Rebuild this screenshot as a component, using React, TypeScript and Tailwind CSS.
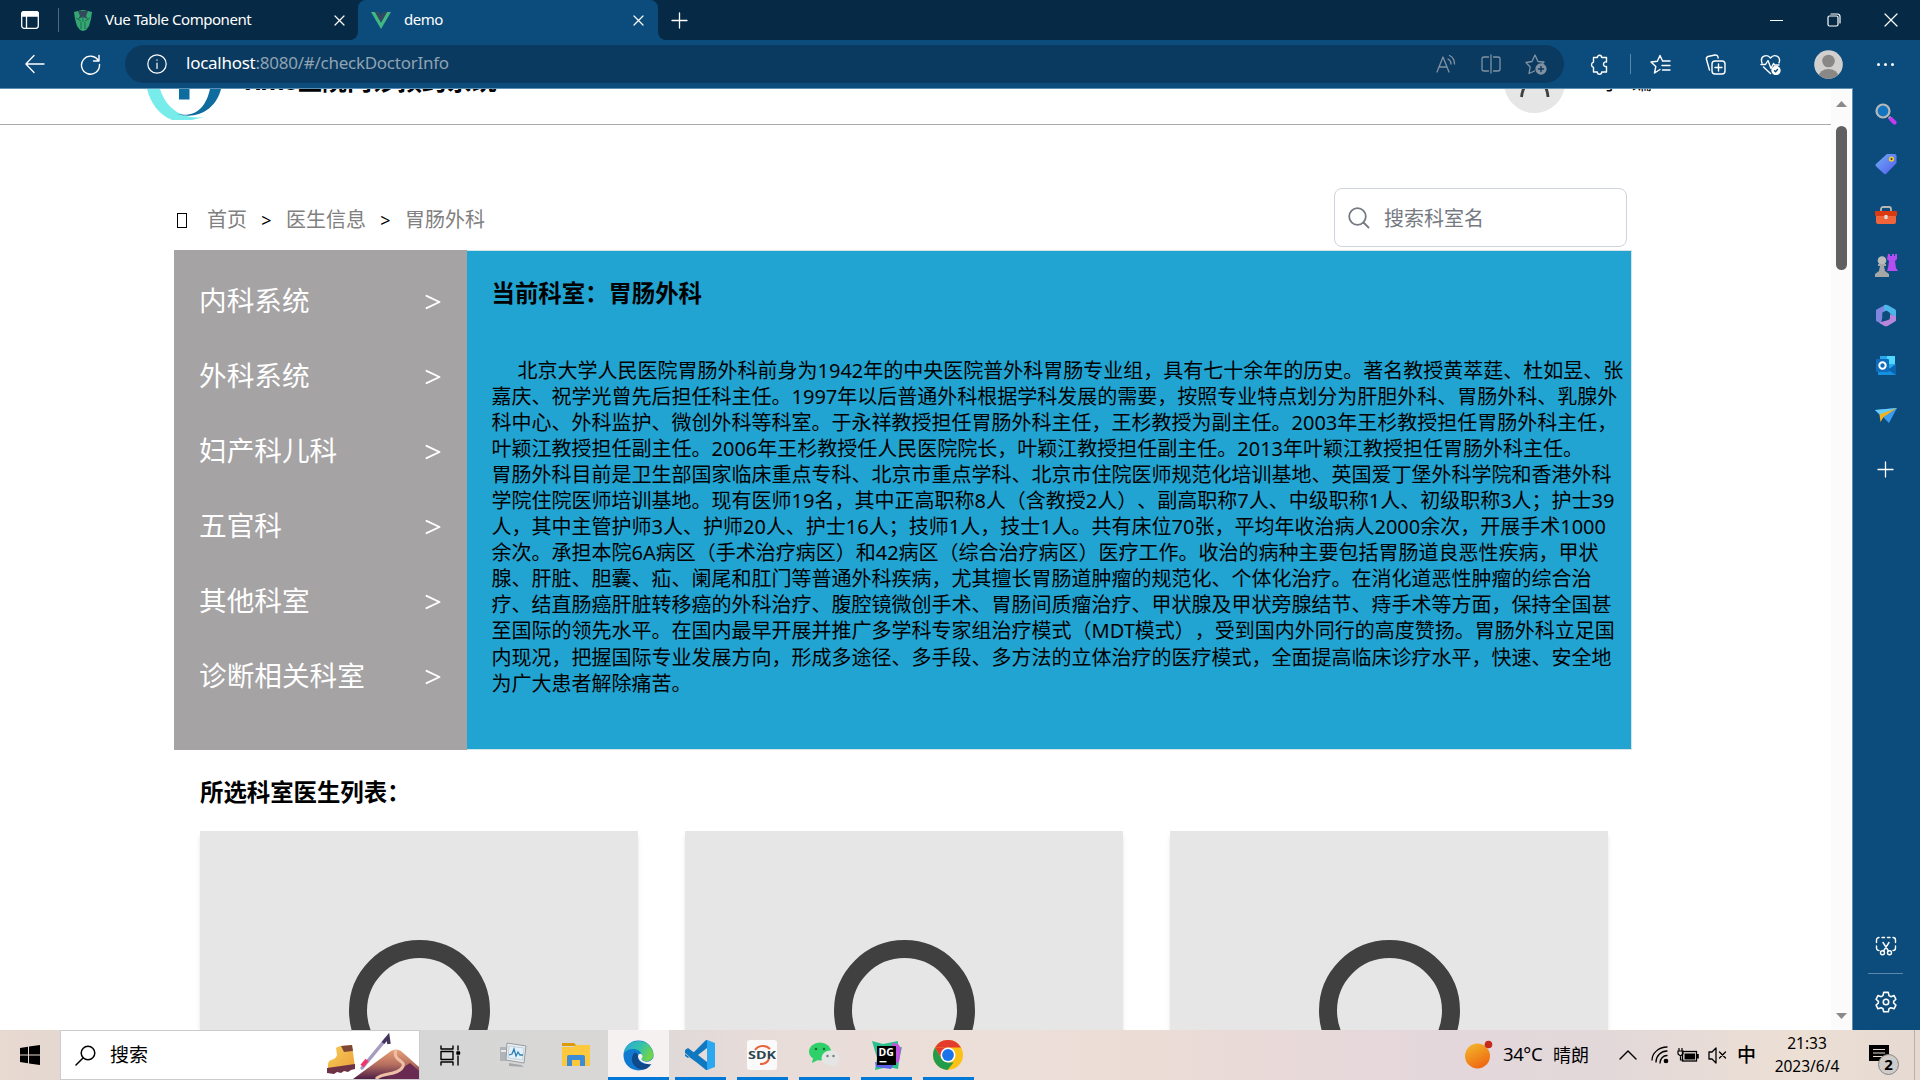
import React from "react";

type Kids = { children?: React.ReactNode };

const Slot = ({ w, children }: { w: string } & Kids) => (
  <div className={`flex shrink-0 items-center justify-center ${w}`}>{children}</div>
);

function Line({ size = 20, box = 20, sw = 1.3, className = "", children }: { size?: number; box?: number; sw?: number; className?: string } & Kids) {
  return (
    <svg width={size} height={size} viewBox={`0 0 ${box} ${box}`} fill="none" stroke="currentColor" strokeWidth={sw} strokeLinecap="round" strokeLinejoin="round" className={`shrink-0 ${className}`}>
      {children}
    </svg>
  );
}

const CloseX = () => (
  <Line size={11} box={11} sw={1.2}>
    <path d="M1 1l9 9M10 1l-9 9" />
  </Line>
);

function TabBar() {
  return (
    <div className="flex h-10 bg-[#0c4c7c] text-white">
      <div className="flex h-10 w-[358px] items-center rounded-br-lg bg-[#062a45]">
        <div className="ml-5 flex h-5 w-5 items-center justify-center">
          <Line size={20}>
            <rect x="1.7" y="1.7" width="16.6" height="16.6" rx="2.5" />
            <path d="M1.7 3.7a2 2 0 0 1 2-2h12.6a2 2 0 0 1 2 2V6H1.7z" fill="white" />
            <path d="M6.5 6v12" />
          </Line>
        </div>
        <div className="ml-[18px] h-6 w-px bg-[#4f6a80]" />
        <svg width="18" height="21" viewBox="0 0 18 21" className="ml-[15px]">
          <path d="M4 1l5-1 5 1 4 1-1 7-2 7-3 4-3 1-3-1-3-4-2-7-1-7z" fill="#35a872" />
          <path d="M4 1h10l-2 5 2 3-5-2-5 2 2-3z" fill="#35495e" />
          <path d="M2 8l5 3M16 8l-5 3M7 12v7M11 12v7M9 6v6" stroke="#1c6b52" strokeWidth="1" />
        </svg>
        <span className="ml-[13px] w-[229px] pb-0.5 text-[15px] tracking-[-0.45px]">Vue Table Component</span>
        <CloseX />
      </div>
      <div className="bg-[#062a45]">
        <div className="flex h-10 w-[300px] items-center rounded-t-lg bg-[#0c4c7c]">
          <svg width="20" height="17" viewBox="0 0 20 17" className="ml-[13px]">
            <path d="M0 0h4l6 10.5L16 0h4L10 17z" fill="#41b883" />
            <path d="M4 0h3.700L10 4l2.300-4H16l-6 10.500z" fill="#35495e" />
          </svg>
          <span className="ml-[13px] w-[229px] pb-0.5 text-[15px] tracking-[-0.5px]">demo</span>
          <CloseX />
        </div>
      </div>
      <div className="flex h-10 flex-1 items-center rounded-bl-lg bg-[#062a45] pl-[13px]">
        <Line size={17} box={17} sw={1.3}>
          <path d="M8.500 1v15M1 8.500h15" />
        </Line>
        <div className="ml-auto flex pr-px">
          <Slot w="w-[57px]">
            <Line size={13} box={13} sw={1.2}><path d="M0 6.500h13" /></Line>
          </Slot>
          <Slot w="w-[57px]">
            <Line size={14} box={14} sw={1.2}>
              <rect x="1" y="3" width="10" height="10" rx="1.500" />
              <path d="M4 1h6.500A2.500 2.500 0 0 1 13 3.500V10" />
            </Line>
          </Slot>
          <Slot w="w-[57px]">
            <Line size={14} box={14} sw={1.2}><path d="M1 1l12 12M13 1L1 13" /></Line>
          </Slot>
        </div>
      </div>
    </div>
  );
}

function Toolbar() {
  return (
    <div className="flex h-12 items-center bg-[#0c4c7c] text-white">
      <div className="flex w-[125px] pl-[15px]">
        <Slot w="w-10">
          <Line size={20}><path d="M19 10H1M9 1.500L.900 10 9 18.500" /></Line>
        </Slot>
        <Slot w="w-[70px]">
          <Line size={21} box={21} sw={1.400}>
            <path d="M18.500 7A9 9 0 1 0 19.500 10.500M19 1.500V7h-5.500" />
          </Line>
        </Slot>
      </div>
      <div className="flex h-[38px] w-[1439px] items-center rounded-full bg-[#0a3a60]">
        <Line size={20} className="ml-[22px]" sw={1.200}>
          <circle cx="10" cy="10" r="9.200" />
          <path d="M10 9v5.500M10 5.800v.400" />
        </Line>
        <span className="ml-[19px] pb-0.5 text-[17px] tracking-[-0.260px] text-[#8fa3b3]">
          <span className="text-white">localhost</span>:8080/#/checkDoctorInfo
        </span>
        <div className="ml-auto flex pr-[6px] text-[#8092a2]">
          <Slot w="w-[45px]">
            <Line size={20} sw={1.300}>
              <path d="M1 18L7 3l6 15M3 13h8M12 5c2 1 3 3 3 5M13.500 1.500c3 1.500 5 4.500 5 8.500" />
            </Line>
          </Slot>
          <Slot w="w-[45px]">
            <Line size={20} sw={1.300}>
              <path d="M10 1v18M7.500 3H3a2 2 0 0 0-2 2v10a2 2 0 0 0 2 2h4.500M12.500 3H17a2 2 0 0 1 2 2v10a2 2 0 0 1-2 2h-4.500" />
            </Line>
          </Slot>
          <Slot w="w-[45px]">
            <Line size={22} box={22} sw={1.300}>
              <path d="M9.500 18L4 20.500l1.200-6.500L1 9.500l6-1L10 2l3 6.500 6 .500-1.500 1.500" />
              <circle cx="16" cy="16" r="5" fill="currentColor" />
              <path d="M13.500 16h5M16 13.500v5" stroke="#0a3a60" strokeWidth="1.400" />
            </Line>
          </Slot>
        </div>
      </div>
      <Slot w="w-[70px]">
        <Line size={21} box={21} sw={1.400}>
          <path d="M4.500 3.500h3.800a2.200 2.200 0 1 1 4.400 0h4.800V8c-4-1-4 5.500 0 4.500V18h-4.800a2.200 2.200 0 1 1-4.400 0H4.500v-4.700a2.700 2.700 0 0 1 0-5.200z" />
        </Line>
      </Slot>
      <div className="-ml-1 h-5 w-px bg-[#5c87a8]" />
      <Slot w="w-[58px]">
        <Line size={21} box={21} sw={1.400}>
          <path d="M10 15.500L4.500 19l1.300-6.500L1 8l6.300-.800L10 1.500l2.700 5.700M13 7h7M12 11.500h8M12.500 16H20" />
        </Line>
      </Slot>
      <Slot w="w-[52px]">
        <Line size={21} box={21} sw={1.400}>
          <rect x="7" y="7" width="13" height="13" rx="3" />
          <path d="M13.500 10v7M10 13.500h7M4.500 16L1.500 5.500A2.500 2.500 0 0 1 3 2.500L10 1a2.500 2.500 0 0 1 3 2l.200 1" />
        </Line>
      </Slot>
      <Slot w="w-[58px]">
        <Line size={21} box={21} sw={1.400}>
          <path d="M2 9C-.500 2 7-.500 10.500 4 14-.500 21.500 2 19 9M1 10.500h4.500L8 6.500l3 8 2.500-5 1 1.500H19M3.500 13l7 6.500" />
          <circle cx="16" cy="16.500" r="4" fill="white" />
          <path d="M14.500 16.800l1 1 2-2.300" stroke="#0c4c7c" />
        </Line>
      </Slot>
      <Slot w="w-[58px]">
        <svg width="29" height="29" viewBox="0 0 29 29">
          <defs><clipPath id="av"><circle cx="14.500" cy="14.500" r="14.300" /></clipPath></defs>
          <g clipPath="url(#av)">
            <rect width="29" height="29" fill="#d2d0ce" />
            <circle cx="14.500" cy="11" r="6.300" fill="#8a8886" />
            <ellipse cx="14.500" cy="27" rx="10" ry="8" fill="#8a8886" />
          </g>
        </svg>
      </Slot>
      <Slot w="w-[56px]">
        <div className="flex gap-1"><i className="h-[3px] w-[3px] rounded-full bg-white" /><i className="h-[3px] w-[3px] rounded-full bg-white" /><i className="h-[3px] w-[3px] rounded-full bg-white" /></div>
      </Slot>
    </div>
  );
}

function SiteHeader() {
  return (
    <header className="flex h-9 shrink-0 items-start overflow-hidden border-b border-[#aaaaaa]">
      <svg width="78" height="31" viewBox="0 0 78 31" className="ml-[146px]">
        <path d="M1 0C5 16 17 33 38 33L58 28C36 31 20 19 14 0z" fill="#78ecea" />
        <path d="M75 0C70 20 52 31 31 25C50 29 60 18 64 0z" fill="#0f6c9f" />
        <rect x="33" y="0" width="10.500" height="10.500" fill="#0f6c9f" />
      </svg>
      <h1 className="-mt-[27px] ml-[16px] w-[269px] text-[25px] leading-9 font-bold whitespace-nowrap"><span className="inline-block w-[57px] tracking-[-1.5px]">Yimo</span>医院门诊预约系统</h1>
      <div className="-mt-[37px] ml-[995px] h-[61px] w-[61px] rounded-full bg-[#e6e6e6] pt-[30px]">
        <svg width="61" height="20" viewBox="0 0 61 20">
          <path d="M17.500 15C19 3 24 -1 31 -1s12 4 13 16" fill="none" stroke="#404040" strokeWidth="2.800" />
        </svg>
      </div>
      <span className="-mt-[18px] ml-[36px] text-[20px] leading-6 tracking-[11px]">小编</span>
    </header>
  );
}

const crumbs = ["首页", "医生信息", "胃肠外科"];
const departments = ["内科系统", "外科系统", "妇产科儿科", "五官科", "其他科室", "诊断相关科室"];
const intro = [
  "北京大学人民医院胃肠外科前身为1942年的中央医院普外科胃肠专业组，具有七十余年的历史。著名教授黄萃莛、杜如昱、张",
  "嘉庆、祝学光曾先后担任科主任。1997年以后普通外科根据学科发展的需要，按照专业特点划分为肝胆外科、胃肠外科、乳腺外",
  "科中心、外科监护、微创外科等科室。于永祥教授担任胃肠外科主任，王杉教授为副主任。2003年王杉教授担任胃肠外科主任，",
  "叶颖江教授担任副主任。2006年王杉教授任人民医院院长，叶颖江教授担任副主任。2013年叶颖江教授担任胃肠外科主任。",
  "胃肠外科目前是卫生部国家临床重点专科、北京市重点学科、北京市住院医师规范化培训基地、英国爱丁堡外科学院和香港外科",
  "学院住院医师培训基地。现有医师19名，其中正高职称8人（含教授2人）、副高职称7人、中级职称1人、初级职称3人；护士39",
  "人，其中主管护师3人、护师20人、护士16人；技师1人，技士1人。共有床位70张，平均年收治病人2000余次，开展手术1000",
  "余次。承担本院6A病区（手术治疗病区）和42病区（综合治疗病区）医疗工作。收治的病种主要包括胃肠道良恶性疾病，甲状",
  "腺、肝脏、胆囊、疝、阑尾和肛门等普通外科疾病，尤其擅长胃肠道肿瘤的规范化、个体化治疗。在消化道恶性肿瘤的综合治",
  "疗、结直肠癌肝脏转移癌的外科治疗、腹腔镜微创手术、胃肠间质瘤治疗、甲状腺及甲状旁腺结节、痔手术等方面，保持全国甚",
  "至国际的领先水平。在国内最早开展并推广多学科专家组治疗模式（MDT模式），受到国内外同行的高度赞扬。胃肠外科立足国",
  "内现况，把握国际专业发展方向，形成多途径、多手段、多方法的立体治疗的医疗模式，全面提高临床诊疗水平，快速、安全地",
  "为广大患者解除痛苦。",
];

function Page() {
  return (
    <main className="flex min-w-0 flex-1 flex-col overflow-hidden bg-white text-black [text-spacing-trim:space-all]">
      <SiteHeader />
      <div className="ml-[174px] w-[1458px]">
        <div className="flex h-[125px] items-end">
          <nav className="mb-[16px] flex items-center text-[20px] leading-[28px]">
            <span className="mr-[20px] ml-[3px] h-[15px] w-[10px] border border-black" />
            {crumbs.map((c, i) => (
              <React.Fragment key={c}>
                {i > 0 && <span className="w-[39px] text-center text-[18px]">&gt;</span>}
                <span className="text-[#808080]">{c}</span>
              </React.Fragment>
            ))}
          </nav>
          <div className="mr-[5px] mb-[3px] ml-auto flex h-[59px] w-[293px] items-center rounded-lg border border-[#cfd3dc] text-[20px] text-[#757a82]">
            <Line size={22} box={22} sw={1.800} className="mr-[14px] ml-[13px]">
              <circle cx="9.500" cy="9.500" r="8.300" />
              <path d="M15.500 15.500l5 5" />
            </Line>
            <span className="pt-0.5">搜索科室名</span>
          </div>
        </div>
        <section className="flex h-[500px]">
          <ul className="w-[293px] bg-[#a5a3a4] pt-[14px] text-white">
            {departments.map((d) => (
              <li key={d} className="flex h-[75px] items-center justify-between pr-[26px] pl-[25px] text-[27.650px]">
                <span className="-mt-px">{d}</span>
                <Line size={16} box={16} sw={1.900}><path d="M1.500 1.800L14.500 8 1.500 14.200" /></Line>
              </li>
            ))}
          </ul>
          <div className="min-w-0 flex-1 border border-l-0 border-[#d5e2e8] bg-[#22a4d2] pl-[24.500px]">
            <h3 className="mt-[24px] text-[23.400px] leading-[36px] font-bold">当前科室：胃肠外科</h3>
            <div className="mt-[47px] text-[20px] leading-[26.050px] whitespace-nowrap">
              {intro.map((l, i) => (
                <p key={l} className={i === 0 ? "pl-[26px]" : ""}>{l}</p>
              ))}
            </div>
          </div>
        </section>
        <section className="pl-[26px]">
          <h3 className="mt-[24px] mb-[21px] text-[23.400px] leading-[36px] font-bold">所选科室医生列表：</h3>
          <div className="flex gap-[47px]">
            {[0, 1, 2].map((k) => (
              <div key={k} className="flex h-[400px] w-[438px] shrink-0 justify-center bg-[#e6e6e6] pt-[109px] shadow-md">
                <div className="h-[141px] w-[141px] rounded-full border-[18px] border-[#404040]" />
              </div>
            ))}
          </div>
        </section>
      </div>
    </main>
  );
}

function Scrollbar() {
  return (
    <div className="flex w-[22px] flex-col items-center border-r border-[#5d8fb3] bg-[#fbfbfb]">
      <svg width="11" height="6" viewBox="0 0 11 6" className="mt-3"><path d="M5.500 0L11 6H0z" fill="#8a8a8a" /></svg>
      <div className="mt-[19px] h-36 w-[11px] rounded-full bg-[#606060]" />
      <svg width="11" height="6" viewBox="0 0 11 6" className="mt-auto mb-[11px]"><path d="M0 0h11L5.500 6z" fill="#8a8a8a" /></svg>
    </div>
  );
}

const sideIcons: React.ReactNode[] = [
  <svg key="search" width="22" height="22" viewBox="0 0 22 22">
    <path d="M14 14l2 2" stroke="#b8b8b8" strokeWidth="3" />
    <path d="M16 16l3.500 3.500" stroke="#c53bf5" strokeWidth="4" strokeLinecap="round" />
    <circle cx="8" cy="8" r="6.500" fill="#1375c0" stroke="#b8b8b8" strokeWidth="2.200" />
  </svg>,
  <svg key="tag" width="22" height="22" viewBox="0 0 22 22">
    <defs><linearGradient id="tg" x1="0" y1="0" x2="1" y2="1"><stop offset="0" stopColor="#6fb0f5" /><stop offset="1" stopColor="#5659ee" /></linearGradient></defs>
    <path d="M12 1h7.500a2 2 0 0 1 2 2v7L11.500 20.500a2 2 0 0 1-2.800 0L1.200 13.500a2 2 0 0 1 0-2.800z" fill="url(#tg)" />
    <circle cx="16.500" cy="6" r="2.600" fill="#f6cc2a" /><circle cx="16.500" cy="6" r="1" fill="#333" />
  </svg>,
  <svg key="tools" width="24" height="18" viewBox="0 0 24 18">
    <path d="M7 6V3a2 2 0 0 1 2-2h6a2 2 0 0 1 2 2v3" fill="none" stroke="#b5b5b5" strokeWidth="1.800" />
    <rect x="2" y="8" width="20" height="10" rx="2" fill="#f0643a" />
    <rect x="1" y="5" width="22" height="5" rx="1" fill="#d93a10" />
    <rect x="10.300" y="9" width="3.400" height="4" rx="1" fill="#ddd" />
  </svg>,
  <svg key="games" width="24" height="24" viewBox="0 0 24 24">
    <path d="M14 1h2v2h2V1h2v2h1V1h2v5l-2 2 1 7 2 3H13l1-3 1-7-2-2z" fill="#b44df2" />
    <circle cx="8" cy="7.500" r="4.300" fill="#b9b9b9" />
    <path d="M4 11h8v2h-2l1 5 4 3v3H1v-3l4-3 1-5H4z" fill="#a6a6a6" />
  </svg>,
  <svg key="m365" width="22" height="23" viewBox="0 0 22 23">
    <path d="M11 .500L1.500 5.500Q1 6 1 7v9q0 1 1 1.500l4 2L7.500 13V9.500L11 7z" fill="#7f86e0" />
    <path d="M9 1.300Q11 0 13 1.300l7 4q1 .600 1 1.700v6.500l-5.500-3.500L9 6.500z" fill="#4bb6ea" />
    <path d="M21 12.500V16q0 1-1 1.600l-7 4.200q-2 1-4 0l-5-3L14.500 15.500V10z" fill="#b986dc" />
    <path d="M7.500 8.500L11.500 6.500l3.500 2.500v5l-4 2.500-3.500-2z" fill="#0c4c7c" />
  </svg>,
  <svg key="mail" width="22" height="21" viewBox="0 0 22 21">
    <rect x="5" y="1" width="15" height="12" fill="#28a8ea" /><rect x="12" y="1" width="8" height="8" fill="#50d9ff" />
    <path d="M3 11l9 4 9-6v11H3z" fill="#1490df" /><path d="M21 9v11l-8-5z" fill="#0a64b0" />
    <rect x="1" y="4" width="13" height="13" rx="1" fill="#0f6cbd" />
    <circle cx="7.500" cy="10.500" r="3.200" fill="none" stroke="white" strokeWidth="2" />
  </svg>,
  <svg key="send" width="22" height="17" viewBox="0 0 22 17">
    <path d="M0 3L22 1 14 16 8 10z" fill="#3b9cf0" /><path d="M0 3L22 1 5 8z" fill="#65cdf8" />
    <path d="M4.500 7.500L22 1 8.500 10 5.500 15z" fill="#f6b21c" />
  </svg>,
];

function EdgeSidebar() {
  return (
    <aside className="flex w-[67px] flex-col items-center bg-[#0c4c7c] pt-px pr-0.5 text-white">
      {sideIcons.map((ic, i) => (
        <div key={i} className="flex h-[50.300px] shrink-0 items-center justify-center">{ic}</div>
      ))}
      <div className="mt-[20px]"><Line size={17} box={17} sw={1.300}><path d="M8.500 1v15M1 8.500h15" /></Line></div>
      <div className="mt-auto">
        <Line size={22} box={22} sw={1.400}>
          <path d="M4 15.500A2.500 2.500 0 0 1 1.500 13v-2M1.500 7.500V5A2.500 2.500 0 0 1 4 2.500M7 2.500h2.500M12.500 2.500H15M18 2.500A2.500 2.500 0 0 1 20.500 5v2.500M20.500 11v2a2.500 2.500 0 0 1-2.500 2.500M8 7.500l5.500 8.500M14 7.500L8.500 16" />
          <circle cx="7.500" cy="17.800" r="2" /><circle cx="14.500" cy="17.800" r="2" />
        </Line>
      </div>
      <div className="mt-[16px] h-px w-[35px] bg-[#5c87a8]" />
      <div className="mt-[17px] mb-[17px]">
        <Line size={22} box={24} sw={1.700}>
          <circle cx="12" cy="12" r="3" />
          <path d="M9.500 1.500h5l.800 3.500 2 1.200 3.500-1.200 2 4-2.500 2.300v1.800l2.500 2.300-2 4-3.500-1.200-2 1.200-.800 3.300h-5l-.800-3.300-2-1.200-3.500 1.200-2-4 2.500-2.300v-1.800L1.200 9l2-4 3.500 1.200 2-1.200z" />
        </Line>
      </div>
    </aside>
  );
}

function AppButton({ w, bar, active, children }: { w: string; bar: string; active?: boolean } & Kids) {
  return (
    <div className={`flex h-[50px] shrink-0 flex-col items-center ${w} ${active ? "bg-[#f4f1f0]" : ""}`}>
      <div className="flex h-[47px] items-center pt-[3px]">{children}</div>
      <div className={`h-[3px] bg-[#0078d7] ${bar}`} />
    </div>
  );
}

function Taskbar() {
  return (
    <footer className="flex h-[50px] items-center bg-[linear-gradient(90deg,#e8d9d1_0px,#e4d8d1_60px,#d6d6d6_420px,#d8d7d6_590px,#e8dcd9_760px,#ecdfd9_980px,#ecdcd6_1150px,#e4d7dc_1440px,#e2d8d9_1600px,#ecdfd4_1800px,#e6d9d2_1920px)] text-black">
      <Slot w="w-[60px]">
        <svg width="20" height="20" viewBox="0 0 20 20" fill="black"><path d="M0 3l8-1.200v7.700H0zM9 1.600L20 0v9.500H9zM0 10.500h8v7.700L0 17zM9 10.500h11V20L9 18.400z" /></svg>
      </Slot>
      <div className="flex h-[50px] w-[360px] items-center border border-[#cccccc] bg-white">
        <Line size={21} box={21} sw={1.500} className="ml-[14px]"><circle cx="13" cy="8" r="6.800" /><path d="M8 13l-7 7" /></Line>
        <span className="ml-[14px] text-[19px]">搜索</span>
        <svg width="95" height="48" viewBox="0 0 95 48" className="ml-auto">
          <defs>
            <linearGradient id="mt" x1="0" y1="0" x2="0" y2="1"><stop offset="0" stopColor="#e8a078" /><stop offset=".5" stopColor="#b8705f" /><stop offset="1" stopColor="#4e1f48" /></linearGradient>
            <linearGradient id="bt" x1="0" y1="0" x2="1" y2="1"><stop offset="0" stopColor="#f6cf5a" /><stop offset="1" stopColor="#eda03c" /></linearGradient>
          </defs>
          <path d="M12 17q2-2 5-2l11-1 3 22-27 2q-1-8 3-9 5-1 6-5z" fill="url(#bt)" />
          <path d="M17 15l11-1 1 6-9 1z" fill="#7d4736" />
          <path d="M3 37l28-4v5l-4 1-3 2-4-1-3 2-4-1-3 2-7-1z" fill="#6e3247" />
          <path d="M38 37L62 8" stroke="#a69bc0" strokeWidth="3.500" strokeLinecap="round" />
          <path d="M38 35l5-6" stroke="#f0356c" strokeWidth="4" />
          <path d="M59 12l5-6 1 7" stroke="#43365c" strokeWidth="3.500" fill="none" />
          <path d="M29 48L67 20q5-3 10 0L95 36V48z" fill="url(#mt)" />
          <path d="M62 48l18-12 6-4 9 8v8z" fill="#6a2b52" />
          <path d="M72 19c-4 12 12 10 6 18s-20 4-26 11" stroke="#eebfa6" strokeWidth="3" fill="none" />
        </svg>
      </div>
      <Slot w="w-[60px]">
        <Line size={21} box={21} sw={1.400}>
          <path d="M1 1v3h12V1M1 20v-3h12v3" /><rect x="1" y="6.500" width="12" height="8" /><path d="M18 1v4M18 11v9" /><rect x="17" y="7" width="2.500" height="2" fill="black" />
        </Line>
      </Slot>
      <Slot w="w-[66px]">
        <svg width="28" height="26" viewBox="0 0 28 26">
          <path d="M1 5h12v14H1z" fill="#b0b4b8" /><path d="M2 8h8v2H2z" fill="#e8e8e8" /><path d="M8 1l19 3-2 17-18-3z" fill="#eceeef" stroke="#979ba0" />
          <path d="M10 4l15 2-1.500 12L9 16z" fill="#e2f1fa" stroke="#9fb4c2" strokeWidth=".5" /><path d="M10 13l3-1 2-5 2 7 2-4 2 3 3 0" stroke="#2c7fb4" fill="none" strokeWidth="1.300" />
          <path d="M10 21l12 2 3 2-15-1z" fill="#a5a8ab" />
        </svg>
      </Slot>
      <Slot w="w-[62px]">
        <svg width="28" height="24" viewBox="0 0 28 24" className="ml-[-3px]">
          <path d="M0 0h12l3 3H0z" fill="#dd9a08" /><path d="M0 4h12l2-2h14v21H0z" fill="#fcc93e" />
          <path d="M5 23v-9a2 2 0 0 1 2-2h14a2 2 0 0 1 2 2v9h-5v-6h-8v6z" fill="#3b8bd9" />
        </svg>
      </Slot>
      <AppButton w="w-[61px]" bar="w-full" active>
        <svg width="31" height="31" viewBox="0 0 31 31">
          <defs>
            <linearGradient id="eg" x1="0" y1="0" x2="1" y2=".4"><stop offset="0" stopColor="#2aa7dc" /><stop offset=".6" stopColor="#35c3a8" /><stop offset="1" stopColor="#70d44a" /></linearGradient>
          </defs>
          <circle cx="15.500" cy="15.500" r="15" fill="#0f7ad0" />
          <path d="M.800 13C3-2 27-4 30.300 14c.500 6-6 9-11 6-2-1-1-2-.500-4C19 9 7 6 .800 13z" fill="url(#eg)" />
          <path d="M11 13c-6 9 2 17 10 16.500 4-1 7-4 8-7-6 3-14 1-14-6 0-2-2-5-4-3.500z" fill="#114a8b" />
          <path d="M19 15c2 3-2 3 0 5 3 3 10 2 11.500-3l.500 5-2 2c-6 1-13-2-14-7 0-4 3-4 4-2z" fill="#f4f1f0" />
        </svg>
      </AppButton>
      <AppButton w="w-[62px]" bar="w-[51px]">
        <svg width="30" height="30" viewBox="0 0 30 30">
          <path d="M21 0L3 18l-3-2v-2L22 30V22L3 8 0 10v3l21 17 3-1V1z" fill="#0f78c0" />
          <path d="M22 0l8 3v24l-8 3z" fill="#2ba8f0" /><path d="M22 8l-9 7 9 7z" fill="#e8dcd9" />
        </svg>
      </AppButton>
      <AppButton w="w-[62px]" bar="w-[51px]">
        <div className="flex h-[30px] w-[30px] items-center justify-center rounded-[3px] bg-[#fafafa]">
          <svg width="28" height="22" viewBox="0 0 28 22">
            <path d="M7 6a9 8 0 0 1 15-1M21 15A9 8 0 0 1 12 20" stroke="#e8643c" strokeWidth="2" fill="none" />
            <text x="0" y="15" fontFamily="Noto Sans" fontWeight="700" fontSize="10.500" textLength="28" lengthAdjust="spacingAndGlyphs" fill="#2d4650">SDK</text>
          </svg>
        </div>
      </AppButton>
      <AppButton w="w-[62px]" bar="w-[51px]">
        <svg width="31" height="26" viewBox="0 0 31 26">
          <ellipse cx="11" cy="9.500" rx="11" ry="9" fill="#2fcf6a" /><path d="M4 16l-1 5 6-3z" fill="#2fcf6a" />
          <circle cx="7" cy="7" r="1.300" fill="#11733a" /><circle cx="15" cy="7" r="1.300" fill="#11733a" />
          <ellipse cx="21.500" cy="16" rx="9" ry="7.500" fill="#e4e6e6" /><path d="M25 21l3 4-6-2z" fill="#e4e6e6" />
          <circle cx="18.500" cy="14" r="1.200" fill="#777" /><circle cx="24.500" cy="14" r="1.200" fill="#777" />
        </svg>
      </AppButton>
      <AppButton w="w-[62px]" bar="w-[51px]">
        <svg width="31" height="31" viewBox="0 0 31 31">
          <path d="M1 1l11 3 15-3v7l4-1-3 14-1 8-10-2-13 3 2-12z" fill="#2bbf90" /><path d="M21 3l6 1 3 4-2 14-8 3z" fill="#c154e0" /><path d="M4 22l10 3 10-2-4 6-15-2z" fill="#5b62e8" />
          <rect x="6" y="6" width="19" height="19" fill="black" />
          <text x="7.500" y="16" fontFamily="Noto Sans" fontWeight="700" fontSize="10.500" fill="white">DG</text>
          <rect x="8.500" y="21" width="7" height="1.400" fill="white" />
        </svg>
      </AppButton>
      <AppButton w="w-[62px]" bar="w-[51px]">
        <svg width="30" height="30" viewBox="0 0 30 30">
          <circle cx="15" cy="15" r="15" fill="#fbc116" />
          <path d="M2 7.500A15 15 0 0 1 28 7.500H15z" fill="#e33b2e" /><path d="M2 7.500L8.500 18.800 15 15V7.500z" fill="#e33b2e" />
          <path d="M2 7.500l6.500 11.300L15 22.500h5.500L14.500 30A15 15 0 0 1 2 7.500z" fill="#229c4a" />
          <circle cx="15" cy="15" r="7.500" fill="white" /><circle cx="15" cy="15" r="5.900" fill="#1a73e8" />
        </svg>
      </AppButton>
      <div className="ml-auto flex h-full items-center">
        <svg width="29" height="30" viewBox="0 0 29 30">
          <defs><linearGradient id="sun" x1=".2" y1="0" x2=".7" y2="1"><stop offset="0" stopColor="#f3b62b" /><stop offset="1" stopColor="#ef6410" /></linearGradient></defs>
          <circle cx="13.500" cy="16" r="12.500" fill="url(#sun)" /><circle cx="24.500" cy="4.500" r="3.800" fill="#c42b1c" />
        </svg>
        <span className="ml-[10px] w-[50px] pb-0.5 text-[18.500px] tracking-[-0.400px]">34°C</span>
        <span className="w-[66px] text-[18px]">晴朗</span>
        <Line size={18} box={18} sw={1.400}><path d="M1 13l8-8 8 8" /></Line>
        <Line size={18} box={18} sw={1.300} className="ml-[14px]">
          <path d="M1 14C1 7 8 1 16 1M5 16c0-6 5-11 11-11M9 17c0-4 3-7.500 7-7.500" /><circle cx="15" cy="15" r="1.700" fill="black" />
        </Line>
        <svg width="22" height="16" viewBox="0 0 22 16" className="ml-[8px]">
          <rect x="5.500" y="4.500" width="14" height="9.500" fill="none" stroke="black" strokeWidth="1.300" /><rect x="7.500" y="6.500" width="10.500" height="6" /><rect x="20" y="7" width="1.800" height="4.500" />
          <path d="M1 4h5v3L3.500 9 1 7zM2 1v3M5 1v3M3.500 8v5h3" stroke="black" fill="none" strokeWidth="1.200" />
        </svg>
        <Line size={19} box={19} sw={1.300} className="ml-[9px]"><path d="M1 6h3l4-4v15l-4-4H1zM11.500 6l6 6M17.500 6l-6 6" /></Line>
        <span className="ml-[10px] w-[35px] text-[19px] font-medium">中</span>
        <div className="flex w-[70px] flex-col items-center text-[15.500px] leading-[23px]"><span>21:33</span><span>2023/6/4</span></div>
        <div className="relative ml-[27px] h-[34px] w-[45px]">
          <svg width="20" height="20" viewBox="0 0 20 20" className="mt-[7px]"><path d="M0 0h20v16h-3v4l-4-4H0z" /><path d="M4 4.500h12M4 8h12M4 11.500h12" stroke="#e6d9d2" strokeWidth="1.100" /></svg>
          <span className="absolute top-[16px] left-[9px] flex h-[21px] w-[21px] items-center justify-center rounded-full border border-[#858585] bg-[#cfcbc9] text-[15px] font-bold">2</span>
        </div>
        <div className="h-full w-px bg-[#b9aea9]" />
        <div className="w-[5px]" />
      </div>
    </footer>
  );
}

export default function App() {
  return (
    <div className="flex h-[1080px] w-[1920px] flex-col overflow-hidden font-['Noto_Sans','Noto_Sans_CJK_SC',sans-serif]">
      <TabBar />
      <Toolbar />
      <div className="flex h-[942px] bg-[#0c4c7c]">
        <div className="flex min-w-0 flex-1 border-t border-[#5d8fb3]">
          <Page />
          <Scrollbar />
        </div>
        <EdgeSidebar />
      </div>
      <Taskbar />
    </div>
  );
}
